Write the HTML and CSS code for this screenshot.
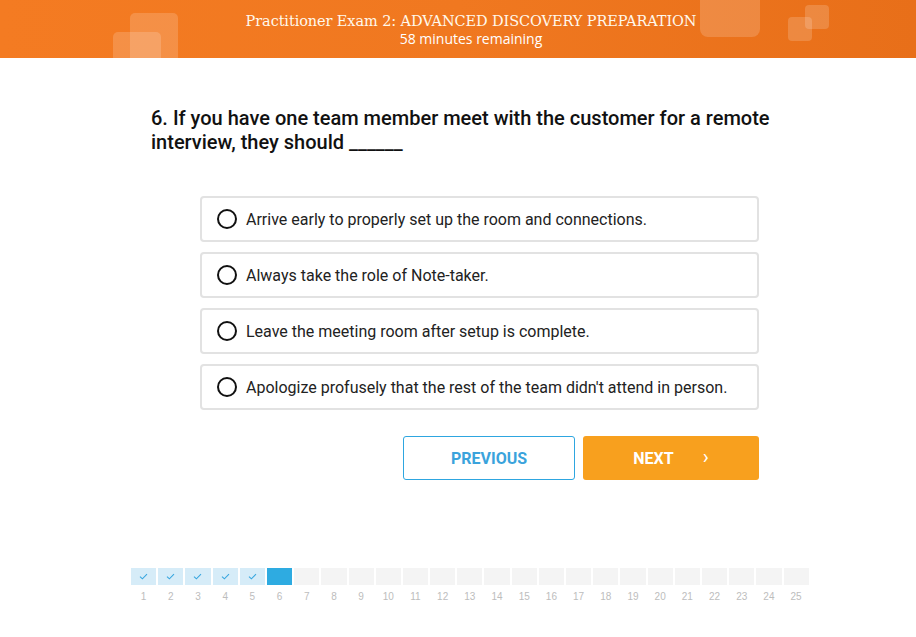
FILE: index.html
```html
<!DOCTYPE html>
<html>
<head>
<meta charset="utf-8">
<link rel="stylesheet" href="styles.css">
</head>
<body>
<header class="topbar">
  <span class="deco deco-a"></span>
  <span class="deco deco-b"></span>
  <span class="deco deco-c"></span>
  <span class="deco deco-d"></span>
  <span class="deco deco-e"></span>
  <div class="topbar-text">
    <div class="exam-title">Practitioner Exam 2: ADVANCED DISCOVERY PREPARATION</div>
    <div class="exam-time">58 minutes remaining</div>
  </div>
</header>

<main class="content">
  <h1 class="question">6. If you have one team member meet with the customer for a remote interview, they should ______</h1>

  <div class="options">
    <label class="option"><span class="radio"></span><span class="option-text">Arrive early to properly set up the room and connections.</span></label>
    <label class="option"><span class="radio"></span><span class="option-text">Always take the role of Note-taker.</span></label>
    <label class="option"><span class="radio"></span><span class="option-text">Leave the meeting room after setup is complete.</span></label>
    <label class="option"><span class="radio"></span><span class="option-text">Apologize profusely that the rest of the team didn't attend in person.</span></label>

    <div class="nav">
      <button class="btn btn-prev">PREVIOUS</button>
      <button class="btn btn-next"><span>NEXT</span><span class="chev">&#8250;</span></button>
    </div>
  </div>
</main>

<footer class="progress">
  <div class="step done"><span class="cell"><svg width="9" height="7" viewBox="0 0 9 7"><path d="M1 3.6 L3.4 5.8 L8 1.2" fill="none" stroke="#39a7df" stroke-width="1.1"/></svg></span><span class="num">1</span></div>
  <div class="step done"><span class="cell"><svg width="9" height="7" viewBox="0 0 9 7"><path d="M1 3.6 L3.4 5.8 L8 1.2" fill="none" stroke="#39a7df" stroke-width="1.1"/></svg></span><span class="num">2</span></div>
  <div class="step done"><span class="cell"><svg width="9" height="7" viewBox="0 0 9 7"><path d="M1 3.6 L3.4 5.8 L8 1.2" fill="none" stroke="#39a7df" stroke-width="1.1"/></svg></span><span class="num">3</span></div>
  <div class="step done"><span class="cell"><svg width="9" height="7" viewBox="0 0 9 7"><path d="M1 3.6 L3.4 5.8 L8 1.2" fill="none" stroke="#39a7df" stroke-width="1.1"/></svg></span><span class="num">4</span></div>
  <div class="step done"><span class="cell"><svg width="9" height="7" viewBox="0 0 9 7"><path d="M1 3.6 L3.4 5.8 L8 1.2" fill="none" stroke="#39a7df" stroke-width="1.1"/></svg></span><span class="num">5</span></div>
  <div class="step current"><span class="cell"></span><span class="num">6</span></div>
  <div class="step"><span class="cell"></span><span class="num">7</span></div>
  <div class="step"><span class="cell"></span><span class="num">8</span></div>
  <div class="step"><span class="cell"></span><span class="num">9</span></div>
  <div class="step"><span class="cell"></span><span class="num">10</span></div>
  <div class="step"><span class="cell"></span><span class="num">11</span></div>
  <div class="step"><span class="cell"></span><span class="num">12</span></div>
  <div class="step"><span class="cell"></span><span class="num">13</span></div>
  <div class="step"><span class="cell"></span><span class="num">14</span></div>
  <div class="step"><span class="cell"></span><span class="num">15</span></div>
  <div class="step"><span class="cell"></span><span class="num">16</span></div>
  <div class="step"><span class="cell"></span><span class="num">17</span></div>
  <div class="step"><span class="cell"></span><span class="num">18</span></div>
  <div class="step"><span class="cell"></span><span class="num">19</span></div>
  <div class="step"><span class="cell"></span><span class="num">20</span></div>
  <div class="step"><span class="cell"></span><span class="num">21</span></div>
  <div class="step"><span class="cell"></span><span class="num">22</span></div>
  <div class="step"><span class="cell"></span><span class="num">23</span></div>
  <div class="step"><span class="cell"></span><span class="num">24</span></div>
  <div class="step"><span class="cell"></span><span class="num">25</span></div>
</footer>
</body>
</html>
```

FILE: styles.css
```css
* { box-sizing: border-box; }
html, body { margin: 0; padding: 0; }
body {
  width: 916px;
  height: 637px;
  overflow: hidden;
  background: #fff;
  font-family: Roboto, "Liberation Sans", sans-serif;
  color: #1e1e1e;
}

.topbar {
  position: relative;
  height: 58px;
  overflow: hidden;
  background: linear-gradient(90deg, #f47b22 0%, #f07820 50%, #e86f19 100%);
  display: flex;
  justify-content: center;
  padding-left: 26px;
}
.deco {
  position: absolute;
  background: rgba(255, 255, 255, 0.17);
  border-radius: 5px;
}
.deco-a { left: 130px; top: 13px; width: 48px; height: 60px; }
.deco-b { left: 113px; top: 32px; width: 48px; height: 40px; }
.deco-c { left: 700px; top: -20px; width: 60px; height: 57px; border-radius: 8px; }
.deco-d { left: 805px; top: 5px; width: 24px; height: 24px; border-radius: 4px; }
.deco-e { left: 788px; top: 17px; width: 24px; height: 24px; border-radius: 4px; }

.topbar-text {
  position: relative;
  text-align: center;
  color: #fff;
  padding-top: 11px;
}
.exam-title {
  font-family: "DejaVu Serif", "Liberation Serif", serif;
  font-size: 14.5px;
  line-height: 20px;
  letter-spacing: -0.1px;
  color: #fff8ec;
}
.exam-time {
  font-family: "Open Sans", sans-serif;
  font-size: 14px;
  line-height: 17px;
  margin-top: -1px;
}

.content {
  padding: 48px 0 0 151px;
}
.question {
  margin: 0;
  width: 640px;
  font-size: 20px;
  line-height: 24px;
  font-weight: 500;
  color: #111;
}

.options {
  margin: 42px 0 0 49px;
  width: 559px;
  display: flex;
  flex-direction: column;
  gap: 10px;
}
.option {
  height: 46px;
  border: 2px solid #e2e2e2;
  border-radius: 4px;
  display: flex;
  align-items: center;
  padding-left: 15px;
  gap: 9px;
}
.radio {
  width: 20px;
  height: 20px;
  border: 2px solid #111;
  border-radius: 50%;
  flex: none;
}
.option-text {
  font-size: 16px;
  color: #222;
}

.nav {
  margin-top: 16px;
  display: flex;
  justify-content: flex-end;
  gap: 8px;
}
.btn {
  height: 44px;
  border-radius: 3px;
  font-family: Roboto, sans-serif;
  font-weight: 700;
  font-size: 16px;
  display: flex;
  align-items: center;
  justify-content: center;
  padding: 0;
}
.btn-prev {
  width: 172px;
  background: #fff;
  border: 1px solid #2ea6e0;
  color: #3aa3dc;
}
.btn-next {
  width: 176px;
  background: #f8a01e;
  border: none;
  color: #fff;
  gap: 29px;
}
.chev {
  font-size: 20px;
  font-weight: 400;
  line-height: 1;
  margin-top: -2px;
}

.progress {
  margin-top: 88px;
  padding-left: 131px;
  display: flex;
  gap: 2px;
}
.step {
  width: 25.2px;
  display: flex;
  flex-direction: column;
  align-items: center;
}
.cell {
  width: 25.2px;
  height: 17px;
  background: #f4f4f4;
  display: flex;
  align-items: center;
  justify-content: center;
}
.step.done .cell { background: #d6ecf8; }
.step.current .cell { background: #2eabe1; }
.num {
  margin-top: 6px;
  font-family: "Liberation Sans", Arial, sans-serif;
  font-size: 10px;
  line-height: 12px;
  color: #bdbdbd;
}
```
